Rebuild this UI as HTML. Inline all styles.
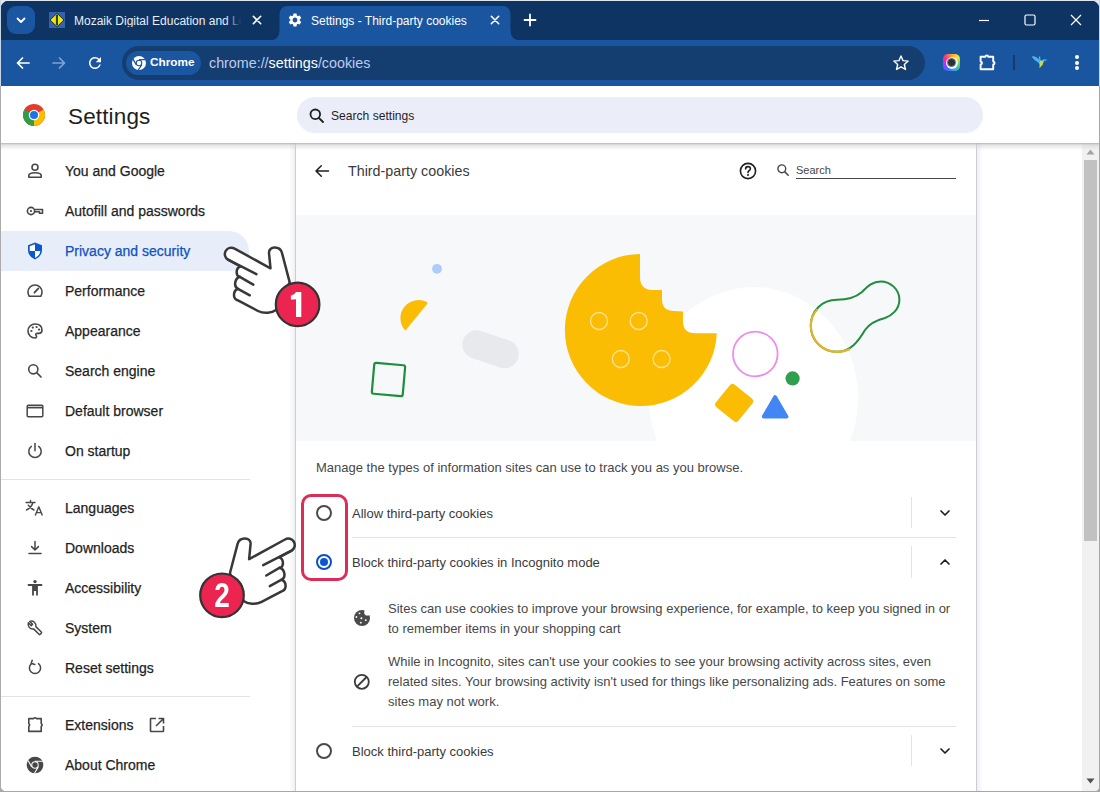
<!DOCTYPE html>
<html><head><meta charset="utf-8">
<style>
*{box-sizing:border-box;margin:0;padding:0}
html,body{width:1100px;height:792px;overflow:hidden;background:linear-gradient(#e3e9f0 0,#e3e9f0 100px,#a8a8a8 700px);font-family:"Liberation Sans",sans-serif}
.abs{position:absolute}
#win{position:absolute;left:0;top:0;width:1100px;height:792px;background:#fff;overflow:hidden;border-radius:10px 10px 8px 8px}
#frame{position:absolute;left:0;top:0;width:1100px;height:792px;border:1px solid #cdd5df;border-radius:9px 9px 7px 7px;pointer-events:none;z-index:50}
#strip{position:absolute;left:0;top:0;width:1100px;height:40px;background:#0e3463}
#toolbar{position:absolute;left:0;top:40px;width:1100px;height:46px;background:#1a56a0}
.t{position:absolute;white-space:nowrap;line-height:1}
.nav{position:absolute;left:65px;font-size:14px;color:#1f1f1f;white-space:nowrap;line-height:16px;-webkit-text-stroke:0.25px currentColor}
.navic{position:absolute;left:25px;width:20px;height:20px}
</style></head><body>
<div id="win">
  <!-- TAB STRIP -->
  <div id="strip"></div>
  <!-- inactive tab hover bg -->
  <!-- tab search button -->
  <div class="abs" style="left:7px;top:6px;width:28px;height:28px;background:#1b57a1;border-radius:9px"></div>
  <svg class="abs" style="left:14px;top:13px" width="14" height="14" viewBox="0 0 14 14"><path d="M3.5 5.5 L7 9 L10.5 5.5" fill="none" stroke="#fff" stroke-width="1.8" stroke-linecap="round" stroke-linejoin="round"/></svg>
  <!-- favicon mozaik -->
  <svg class="abs" style="left:49px;top:12px" width="16" height="16" viewBox="0 0 16 16"><rect x="0" y="0" width="16" height="16" fill="#3461b0"/><path d="M8 1.3 L15 8 L8 14.7 L1 8 Z" fill="#f7e60b" stroke="#10223a" stroke-width="0.9"/><rect x="6.9" y="2.6" width="2.1" height="10.8" fill="#24492c"/></svg>
  <div class="t" style="left:74px;top:15px;font-size:12px;color:#e8eef8;width:168px;overflow:hidden">Mozaik Digital Education and Le</div>
  <div class="abs" style="left:226px;top:8px;width:18px;height:24px;background:linear-gradient(90deg,rgba(14,52,99,0),#0e3463 85%)"></div>
  <svg class="abs" style="left:252px;top:15px" width="10" height="10" viewBox="0 0 10 10"><path d="M1.3 1.3 L8.7 8.7 M8.7 1.3 L1.3 8.7" stroke="#fff" stroke-width="1.6" stroke-linecap="round"/></svg>
  <!-- active tab -->
  <svg class="abs" style="left:0;top:0" width="600" height="41" viewBox="0 0 600 41"><path d="M269.5 40.5 Q279.5 40.5 279.5 30 L279.5 15 Q279.5 6 288.5 6 L501.5 6 Q510.5 6 510.5 15 L510.5 30 Q510.5 40.5 520.5 40.5 Z" fill="#1a56a0"/></svg>
  <svg class="abs" style="left:287px;top:12px" width="16" height="16" viewBox="0 0 24 24"><path fill="#fff" d="M19.14 12.94c.04-.3.06-.61.06-.94 0-.32-.02-.64-.07-.94l2.03-1.58a.49.49 0 0 0 .12-.61l-1.92-3.32a.488.488 0 0 0-.59-.22l-2.39.96c-.5-.38-1.03-.7-1.62-.94l-.36-2.54a.484.484 0 0 0-.48-.41h-3.84c-.24 0-.43.17-.47.41l-.36 2.54c-.59.24-1.13.57-1.62.94l-2.39-.96c-.22-.08-.47 0-.59.22L2.74 8.87c-.12.21-.08.47.12.61l2.03 1.58c-.05.3-.09.63-.09.94s.02.64.07.94l-2.03 1.58a.49.49 0 0 0-.12.61l1.92 3.32c.12.22.37.29.59.22l2.39-.96c.5.38 1.03.7 1.62.94l.36 2.54c.05.24.24.41.48.41h3.84c.24 0 .44-.17.47-.41l.36-2.54c.59-.24 1.13-.56 1.62-.94l2.39.96c.22.08.47 0 .59-.22l1.92-3.32c.12-.22.07-.47-.12-.61l-2.01-1.58zM12 15.6c-1.98 0-3.6-1.62-3.6-3.6s1.62-3.6 3.6-3.6 3.6 1.62 3.6 3.6-1.62 3.6-3.6 3.6z"/></svg>
  <div class="t" style="left:311px;top:15px;font-size:12px;color:#ffffff">Settings - Third-party cookies</div>
  <svg class="abs" style="left:490px;top:15px" width="10" height="10" viewBox="0 0 10 10"><path d="M1.3 1.3 L8.7 8.7 M8.7 1.3 L1.3 8.7" stroke="#fff" stroke-width="1.6" stroke-linecap="round"/></svg>
  <!-- new tab plus -->
  <svg class="abs" style="left:523px;top:13px" width="14" height="14" viewBox="0 0 14 14"><path d="M7 1.5 V12.5 M1.5 7 H12.5" stroke="#fff" stroke-width="1.8" stroke-linecap="round"/></svg>
  <!-- window controls -->
  <svg class="abs" style="left:978px;top:14px" width="12" height="12" viewBox="0 0 12 12"><path d="M1 6.5 H11" stroke="#fff" stroke-width="1.2"/></svg>
  <svg class="abs" style="left:1024px;top:14px" width="12" height="12" viewBox="0 0 12 12"><rect x="1" y="1" width="10" height="10" rx="1.5" fill="none" stroke="#fff" stroke-width="1.2"/></svg>
  <svg class="abs" style="left:1070px;top:14px" width="12" height="12" viewBox="0 0 12 12"><path d="M1 1 L11 11 M11 1 L1 11" stroke="#fff" stroke-width="1.2"/></svg>

  <!-- TOOLBAR -->
  <div id="toolbar"></div>
  <svg class="abs" style="left:14px;top:54px" width="18" height="18" viewBox="0 0 18 18"><path d="M15 9 H3.5 M8.5 4 L3.5 9 L8.5 14" fill="none" stroke="#fff" stroke-width="1.7" stroke-linecap="round" stroke-linejoin="round"/></svg>
  <svg class="abs" style="left:50px;top:54px" width="18" height="18" viewBox="0 0 18 18"><path d="M3 9 H14.5 M9.5 4 L14.5 9 L9.5 14" fill="none" stroke="#7fa3d6" stroke-width="1.7" stroke-linecap="round" stroke-linejoin="round"/></svg>
  <svg class="abs" style="left:86px;top:54px" width="18" height="18" viewBox="0 0 24 24"><path fill="#fff" d="M17.65 6.35A7.958 7.958 0 0 0 12 4c-4.42 0-7.99 3.58-7.99 8s3.57 8 7.99 8c3.73 0 6.84-2.550 7.73-6h-2.08A5.99 5.99 0 0 1 12 18c-3.31 0-6-2.69-6-6s2.69-6 6-6c1.660 0 3.140.690 4.220 1.780L13 11h7V4l-2.35 2.35z"/></svg>
  <!-- omnibox -->
  <div class="abs" style="left:122px;top:46px;width:803px;height:34px;background:#153e70;border-radius:17px"></div>
  <div class="abs" style="left:126px;top:51px;width:75px;height:24px;background:#1b56a0;border-radius:12px"></div>
  <svg class="abs" style="left:131px;top:55px" width="16" height="16" viewBox="0 0 16 16"><circle cx="8" cy="8" r="7" fill="#fff"/><circle cx="8" cy="8" r="3.3" fill="#1b56a0"/><circle cx="8" cy="8" r="2.2" fill="#fff"/><path d="M8 4.7 H14.6 M5.2 9.6 L1.8 3.6 M10.8 9.7 L7.3 15" stroke="#1b56a0" stroke-width="1.3"/></svg>
  <div class="t" style="left:150px;top:57px;font-size:11.8px;font-weight:700;color:#ffffff">Chrome</div>
  <div class="t" style="left:209px;top:56px;font-size:14.3px;color:#bfcbef">chrome://<span style="color:#fff">settings</span>/cookies</div>
  <svg class="abs" style="left:891px;top:53px" width="20" height="20" viewBox="0 0 24 24"><path d="M12 3.5 L14.5 9.2 L20.6 9.7 L16 13.8 L17.4 19.8 L12 16.6 L6.6 19.8 L8 13.8 L3.4 9.7 L9.5 9.2 Z" fill="none" stroke="#fff" stroke-width="1.7" stroke-linejoin="round"/></svg>
  <!-- colorful ext -->
  <div class="abs" style="left:943px;top:54px;width:17px;height:17px;border-radius:5px;background:conic-gradient(#ffa21f,#f5e83c,#5fd35a,#27b4f0,#3b6bff,#a13bff,#ff2f8a,#ffa21f)"></div>
  <div class="abs" style="left:945.5px;top:56.5px;width:12px;height:12px;border-radius:50%;background:#f2f2f2"></div>
  <div class="abs" style="left:947px;top:58px;width:9px;height:9px;border-radius:50%;background:#2a2f3a;border:1px solid #6b7280"></div>
  <!-- puzzle -->
  <svg class="abs" style="left:978px;top:52px" width="20" height="20" viewBox="0 0 20 20"><path d="M2.6 4.8 H7.4 A1.4 1.4 0 0 1 10.2 4.8 H15.2 V9.6 A1.4 1.4 0 0 1 15.2 12.4 V17.2 H2.6 V12.4 A1.4 1.4 0 0 0 2.6 9.6 Z" fill="none" stroke="#fff" stroke-width="1.9" stroke-linejoin="round"/></svg>
  <div class="abs" style="left:1013px;top:55px;width:2px;height:15px;background:#123a6b"></div>
  <!-- bird -->
  <svg class="abs" style="left:1031px;top:55px" width="17" height="14" viewBox="0 0 17 14"><path d="M0.5 1.5 Q5 0.5 8 5 Q7 2 9 1 Q9.5 4 9.5 5.5 L12.5 4.5 Q14.5 4 16.5 5 L12.8 6.3 Q12 10.5 8.5 13 Q9 9.5 7.5 7.8 Q3.5 6 0.5 1.5Z" fill="#49b4ec"/><path d="M9.5 5.8 L12.8 6.3 Q12 10.5 8.5 13 Q9.3 9.5 8.5 7.5 Z" fill="#d7d538"/></svg>
  <!-- menu dots -->
  <div class="abs" style="left:1075px;top:55px;width:4px;height:4px;border-radius:50%;background:#fff"></div>
  <div class="abs" style="left:1075px;top:60.6px;width:4px;height:4px;border-radius:50%;background:#fff"></div>
  <div class="abs" style="left:1075px;top:66.2px;width:4px;height:4px;border-radius:50%;background:#fff"></div>
  <!-- SETTINGS HEADER -->
  <div class="abs" style="left:0;top:86px;width:1100px;height:57px;background:#fff"></div>
  
  <svg class="abs" style="left:22px;top:103px" width="24" height="24" viewBox="0 0 48 48"><circle cx="24" cy="24" r="22" fill="#e33b2e"/><path d="M24 24 L43.05 13 A22 22 0 0 1 24 46 Z" fill="#fbbd04"/><path d="M24 24 L24 46 A22 22 0 0 1 4.95 13 Z" fill="#2f9e48"/><path d="M24 24 L4.95 13 A22 22 0 0 1 11.3 6 L24 24Z" fill="#e33b2e"/><circle cx="24" cy="24" r="10.5" fill="#fff"/><circle cx="24" cy="24" r="8" fill="#1a73e8"/></svg>
  <div class="t" style="left:68px;top:106px;font-size:22.5px;letter-spacing:0.15px;color:#1f1f1f">Settings</div>
  <div class="abs" style="left:297px;top:97px;width:686px;height:36px;background:#ebedf8;border-radius:18px"></div>
  <svg class="abs" style="left:308px;top:107px" width="18" height="18" viewBox="0 0 18 18"><circle cx="7.3" cy="7.3" r="4.8" fill="none" stroke="#1f1f1f" stroke-width="1.8"/><path d="M10.8 10.8 L15 15" stroke="#1f1f1f" stroke-width="1.9" stroke-linecap="round"/></svg>
  <div class="t" style="left:331px;top:110px;font-size:12.1px;color:#1f1f1f">Search settings</div>

  <!-- SIDEBAR -->
  <div class="abs" style="left:0;top:231px;width:249px;height:40px;background:#e8eef9;border-radius:0 20px 20px 0"></div>
  <div class="nav" style="top:163px">You and Google</div>
  <div class="nav" style="top:203px">Autofill and passwords</div>
  <div class="nav" style="top:243px;color:#0f52c2">Privacy and security</div>
  <div class="nav" style="top:283px">Performance</div>
  <div class="nav" style="top:323px">Appearance</div>
  <div class="nav" style="top:363px">Search engine</div>
  <div class="nav" style="top:403px">Default browser</div>
  <div class="nav" style="top:443px">On startup</div>
  <div class="abs" style="left:0;top:479px;width:250px;height:1px;background:#e3e3e3"></div>
  <div class="nav" style="top:500px">Languages</div>
  <div class="nav" style="top:540px">Downloads</div>
  <div class="nav" style="top:580px">Accessibility</div>
  <div class="nav" style="top:620px">System</div>
  <div class="nav" style="top:660px">Reset settings</div>
  <div class="abs" style="left:0;top:696px;width:250px;height:1px;background:#e3e3e3"></div>
  <div class="nav" style="top:717px">Extensions</div>
  <div class="nav" style="top:757px">About Chrome</div>

  <!-- sidebar icons -->
  <svg class="abs" style="left:25px;top:161px" width="20" height="20" viewBox="0 0 20 20"><circle cx="10" cy="6.3" r="3" fill="none" stroke="#474747" stroke-width="1.6"/><path d="M3.8 16.2 V14.6 Q3.8 11.8 10 11.8 Q16.2 11.8 16.2 14.6 V16.2 Z" fill="none" stroke="#474747" stroke-width="1.6" stroke-linejoin="round"/></svg>
  <svg class="abs" style="left:25px;top:201px" width="20" height="20" viewBox="0 0 20 20"><circle cx="6" cy="10" r="3.6" fill="none" stroke="#474747" stroke-width="1.6"/><circle cx="6" cy="10" r="1.1" fill="#474747"/><path d="M9.6 8.5 H17.5 V12.2 H14.5 V10.8 H9.8" fill="none" stroke="#474747" stroke-width="1.6" stroke-linejoin="round"/></svg>
  <svg class="abs" style="left:25px;top:241px" width="20" height="20" viewBox="0 0 20 20"><path d="M10 1.6 L17 4.3 V9.3 Q17 15.3 10 18.6 Q3 15.3 3 9.3 V4.3 Z" fill="#0b57d0"/><path d="M10 10 H15.3 Q14.9 14.5 10 17 Z" fill="#fff"/><path d="M10 3.3 V10 H4.7 V5.3 Z" fill="#fff"/></svg>
  <svg class="abs" style="left:25px;top:281px" width="20" height="20" viewBox="0 0 20 20"><path d="M4.2 15.3 Q3 13.4 3 11 A7 7 0 0 1 17 11 Q17 13.4 15.8 15.3 Z" fill="none" stroke="#474747" stroke-width="1.6" stroke-linejoin="round"/><path d="M9.4 11.7 L13.4 7.4" stroke="#474747" stroke-width="1.8" stroke-linecap="round"/></svg>
  <svg class="abs" style="left:25px;top:321px" width="20" height="20" viewBox="0 0 20 20"><path d="M10 3 A7 7 0 0 0 10 17 Q11.6 17 11.6 15.6 Q11.6 14.8 11 14.2 Q10.5 13.6 10.9 12.9 Q11.3 12.4 12.2 12.4 H13.6 Q17 12.4 17 9.3 Q17 3 10 3 Z" fill="none" stroke="#474747" stroke-width="1.6" stroke-linejoin="round"/><circle cx="6.4" cy="10" r="1.1" fill="#474747"/><circle cx="7.8" cy="6.6" r="1.1" fill="#474747"/><circle cx="11.6" cy="6" r="1.1" fill="#474747"/><circle cx="14" cy="8.6" r="1.1" fill="#474747"/></svg>
  <svg class="abs" style="left:25px;top:361px" width="20" height="20" viewBox="0 0 20 20"><circle cx="8.3" cy="8.3" r="4.6" fill="none" stroke="#474747" stroke-width="1.6"/><path d="M11.7 11.7 L16 16" stroke="#474747" stroke-width="1.7" stroke-linecap="round"/></svg>
  <svg class="abs" style="left:25px;top:401px" width="20" height="20" viewBox="0 0 20 20"><rect x="2.2" y="4.2" width="15.6" height="11.6" rx="1" fill="none" stroke="#474747" stroke-width="1.5"/><path d="M2.5 6.6 H17.5" stroke="#474747" stroke-width="1.7"/></svg>
  <svg class="abs" style="left:25px;top:441px" width="20" height="20" viewBox="0 0 20 20"><path d="M6.3 5.4 A6.2 6.2 0 1 0 13.7 5.4" fill="none" stroke="#474747" stroke-width="1.5" stroke-linecap="round"/><path d="M10 2.6 V9.8" stroke="#474747" stroke-width="1.5" stroke-linecap="round"/></svg>
  <!-- languages -->
  <svg class="abs" style="left:24px;top:498px" width="22" height="20" viewBox="0 0 22 20"><path d="M2 4.5 H11 M6.5 2.5 V4.5 M9 4.5 Q7.5 9.5 2.5 12 M4.3 7.2 Q6.5 10.5 10 12" fill="none" stroke="#474747" stroke-width="1.4" stroke-linecap="round"/><path d="M11.2 17.5 L14.8 8.8 L18.4 17.5 M12.5 14.6 H17.1" fill="none" stroke="#474747" stroke-width="1.4" stroke-linejoin="round"/></svg>
  <svg class="abs" style="left:25px;top:538px" width="20" height="20" viewBox="0 0 20 20"><path d="M10 3.5 V11.8 M6.6 8.6 L10 12 L13.4 8.6" fill="none" stroke="#474747" stroke-width="1.5" stroke-linecap="round" stroke-linejoin="round"/><path d="M4 15.6 H16" stroke="#474747" stroke-width="1.5" stroke-linecap="round"/></svg>
  <svg class="abs" style="left:25px;top:578px" width="20" height="20" viewBox="0 0 20 20"><circle cx="10" cy="3.6" r="1.7" fill="#474747"/><path d="M3.5 7 H16.5" stroke="#474747" stroke-width="1.8" stroke-linecap="round"/><path d="M8 7 V17.5 M12 7 V17.5 M8 12 H12" stroke="#474747" stroke-width="1.8"/><rect x="8" y="7" width="4" height="5" fill="#474747"/></svg>
  <svg class="abs" style="left:25px;top:618px" width="20" height="20" viewBox="0 0 20 20"><path d="M3.4 4.8 L6.2 7.6 L7.6 6.2 L4.8 3.4 A4.6 4.6 0 0 1 10.9 8.6 L16.3 14 Q16.9 14.6 16.3 15.2 L15.2 16.3 Q14.6 16.9 14 16.3 L8.6 10.9 A4.6 4.6 0 0 1 3.4 4.8 Z" fill="none" stroke="#474747" stroke-width="1.5" stroke-linejoin="round"/></svg>
  <svg class="abs" style="left:25px;top:658px" width="20" height="20" viewBox="0 0 20 20"><path d="M6.5 5.6 A5.6 5.6 0 1 0 13.5 5.6" fill="none" stroke="#474747" stroke-width="1.5" stroke-linecap="round"/><path d="M10 5.2 L6.2 5.2 L6.2 2.2" fill="none" stroke="#474747" stroke-width="1.5" stroke-linejoin="round" stroke-linecap="round" transform="rotate(20 6.2 5.2)"/></svg>
  <!-- extensions -->
  <svg class="abs" style="left:25px;top:715px" width="20" height="20" viewBox="0 0 20 20"><path d="M3.8 3.6 H8.6 Q10 1.8 11.4 3.6 H16.2 V8.6 Q18.2 10 16.2 11.4 V16.4 H3.8 V11.4 Q5.4 10 3.8 8.6 Z" fill="none" stroke="#474747" stroke-width="1.6" stroke-linejoin="round"/></svg>
  <svg class="abs" style="left:148px;top:716px" width="18" height="18" viewBox="0 0 18 18"><path d="M8 2.5 H3 A0.5 0.5 0 0 0 2.5 3 V15 A0.5 0.5 0 0 0 3 15.5 H15 A0.5 0.5 0 0 0 15.5 15 V10" fill="none" stroke="#474747" stroke-width="1.6"/><path d="M10.5 2.5 H15.5 V7.5 M15.3 2.7 L8 10" fill="none" stroke="#474747" stroke-width="1.6"/></svg>
  <svg class="abs" style="left:25px;top:755px" width="20" height="20" viewBox="0 0 48 48"><circle cx="24" cy="24" r="20" fill="#474747"/><circle cx="24" cy="24" r="9" fill="#fff"/><circle cx="24" cy="24" r="6.5" fill="#474747"/><path d="M24 15 H42 M16.2 28.5 L7.2 13 M31.8 28.5 L22.8 44" stroke="#fff" stroke-width="2.6"/></svg>
  <!-- MAIN CARD -->
  <div class="abs" style="left:289px;top:143px;width:6px;height:649px;background:linear-gradient(90deg,rgba(255,255,255,0),#f0f0f3)"></div>
  <div class="abs" style="left:977px;top:143px;width:6px;height:649px;background:linear-gradient(90deg,#f0f0f3,rgba(255,255,255,0))"></div>
  <div class="abs" style="left:295px;top:143px;width:682px;height:649px;background:#fff;border-left:1px solid #cdcdd1;border-right:1px solid #cdcdd1"></div>
  
  <!-- subpage header -->
  <svg class="abs" style="left:313px;top:162px" width="18" height="18" viewBox="0 0 18 18"><path d="M15.5 9 H3 M8.3 3.7 L3 9 L8.3 14.3" fill="none" stroke="#1f1f1f" stroke-width="1.5" stroke-linecap="round" stroke-linejoin="round"/></svg>
  <div class="t" style="left:348px;top:164px;font-size:14.3px;color:#3a3a3a">Third-party cookies</div>
  <svg class="abs" style="left:738px;top:161px" width="20" height="20" viewBox="0 0 20 20"><circle cx="10" cy="10" r="7.6" fill="none" stroke="#1f1f1f" stroke-width="1.6"/><path d="M7.6 7.9 Q7.6 5.6 10 5.6 Q12.4 5.6 12.4 7.7 Q12.4 9 11 9.7 Q10 10.2 10 11.6" fill="none" stroke="#1f1f1f" stroke-width="1.6" stroke-linecap="round"/><circle cx="10" cy="13.9" r="1" fill="#1f1f1f"/></svg>
  <svg class="abs" style="left:776px;top:163px" width="14" height="14" viewBox="0 0 14 14"><circle cx="5.8" cy="5.8" r="3.9" fill="none" stroke="#474747" stroke-width="1.4"/><path d="M8.6 8.6 L12.2 12.2" stroke="#474747" stroke-width="1.5" stroke-linecap="round"/></svg>
  <div class="t" style="left:796px;top:165px;font-size:11px;color:#474747">Search</div>
  <div class="abs" style="left:796px;top:178px;width:160px;height:1px;background:#474747"></div>

  <!-- BANNER -->
  <svg class="abs" style="left:296px;top:215px" width="680" height="226" viewBox="296 215 680 226">
    <rect x="296" y="215" width="680" height="226" fill="#f7f8fa"/>
    <ellipse cx="753.5" cy="398" rx="104.5" ry="111" fill="#ffffff"/>
    <!-- cookie -->
    <path d="M640 254 A76 76 0 1 0 716.8 333.3 L695 333.3 Q683 333 683 321.5 L683 311.5 L673.5 311 Q662 310.5 662 299.5 L662 290 L652 290 Q640 289.5 640 277 Z" fill="#fbbc04"/>
    <g fill="none" stroke="#fde293" stroke-width="1.3">
      <circle cx="599" cy="321" r="8.5"/><circle cx="638.7" cy="321" r="8.5"/>
      <circle cx="620.8" cy="359" r="8.5"/><circle cx="661.6" cy="359" r="8.5"/>
    </g>
    <circle cx="437" cy="268.8" r="4.9" fill="#aecbfa"/>
    <path d="M426.5 303 A17.2 17.2 0 0 0 405.3 329.2 Z" fill="#fbbc04" stroke="#fbbc04" stroke-width="2" stroke-linejoin="round"/>
    <rect x="461.5" y="335" width="58" height="28.5" rx="14.25" fill="#e8e9ec" transform="rotate(19 490.5 349.2)"/>
    <rect x="373" y="364" width="31" height="31" rx="2" fill="none" stroke="#1e8e3e" stroke-width="2.2" transform="rotate(5 388.5 379.5)"/>
    <circle cx="755.3" cy="354" r="22.3" fill="none" stroke="#ee8bef" stroke-width="1.8"/>
    <circle cx="792.6" cy="378.4" r="7.1" fill="#2e9e4f"/>
    <rect x="719.7" y="388.4" width="29" height="29" rx="3.5" fill="#fbbc04" transform="rotate(39 734.2 402.9)"/>
    <path d="M775.1 397 L786.6 416.6 L763.6 416.6 Z" fill="#4285f4" stroke="#4285f4" stroke-width="3.6" stroke-linejoin="round"/>
    <path d="M837 351.8 C822 351.8 810.8 340 810.8 325.7 C810.8 311 822 299.8 837 299.8 C848 299.8 855 298 862 292 C868 286 873 281.4 880.7 281.4 C891 281.4 899.4 290 899.4 299.5 C899.4 310 891 316 885 318 C877 320 870 323 865 330 C858 342 850 351.8 837 351.8 Z" fill="none" stroke="#1e8e3e" stroke-width="2"/>
    <path d="M850 349 C846 351 841 351.8 837 351.8 C822 351.8 810.8 340 810.8 325.7 C810.8 319 813 313.5 817.6 309.2" fill="none" stroke="#e3b42b" stroke-width="2.2"/>
  </svg>

  <div class="t" style="left:316px;top:461px;font-size:13px;color:#474747">Manage the types of information sites can use to track you as you browse.</div>

  <!-- radio rows -->
  <div class="abs" style="left:316px;top:505px;width:16px;height:16px;border-radius:50%;border:2px solid #4a4a4a"></div>
  <div class="t" style="left:352px;top:507px;font-size:13px;color:#3a3a3a">Allow third-party cookies</div>
  <div class="abs" style="left:911px;top:497px;width:1px;height:31px;background:#e3e3e3"></div>
  <svg class="abs" style="left:938px;top:506px" width="14" height="14" viewBox="0 0 14 14"><path d="M3 5 L7 9 L11 5" fill="none" stroke="#1f1f1f" stroke-width="1.7" stroke-linecap="round" stroke-linejoin="round"/></svg>
  <div class="abs" style="left:352px;top:537px;width:604px;height:1px;background:#e3e3e3"></div>

  <div class="abs" style="left:316px;top:554px;width:16px;height:16px;border-radius:50%;border:2.3px solid #0b4fc8"></div>
  <div class="abs" style="left:320px;top:558px;width:8px;height:8px;border-radius:50%;background:#0b57d0"></div>
  <div class="t" style="left:352px;top:556px;font-size:13px;color:#3a3a3a">Block third-party cookies in Incognito mode</div>
  <div class="abs" style="left:911px;top:546px;width:1px;height:32px;background:#e3e3e3"></div>
  <svg class="abs" style="left:938px;top:555px" width="14" height="14" viewBox="0 0 14 14"><path d="M3 9 L7 5 L11 9" fill="none" stroke="#1f1f1f" stroke-width="1.7" stroke-linecap="round" stroke-linejoin="round"/></svg>

  <!-- expanded -->
  <svg class="abs" style="left:353px;top:609px" width="18" height="18" viewBox="0 0 18 18"><defs><mask id="ck"><rect width="18" height="18" fill="#fff"/><circle cx="14.6" cy="3.2" r="3.4" fill="#000"/><circle cx="6.5" cy="4.3" r="0.9" fill="#000"/><circle cx="3.4" cy="8" r="0.9" fill="#000"/><circle cx="8.4" cy="9.3" r="1" fill="#000"/><circle cx="12.8" cy="11.2" r="0.9" fill="#000"/><circle cx="7.8" cy="13.7" r="0.9" fill="#000"/></mask></defs><circle cx="9" cy="9" r="8" fill="#4a4a4a" mask="url(#ck)"/></svg>
  <div class="abs" style="left:388px;top:599px;font-size:13px;line-height:20px;color:#474747;width:570px">Sites can use cookies to improve your browsing experience, for example, to keep you signed in or<br>to remember items in your shopping cart</div>
  <svg class="abs" style="left:353px;top:673px" width="18" height="18" viewBox="0 0 18 18"><circle cx="8.8" cy="8.8" r="7" fill="none" stroke="#3c3c3c" stroke-width="1.8"/><path d="M4 13.6 L13.6 4" stroke="#3c3c3c" stroke-width="1.9"/></svg>
  <div class="abs" style="left:388px;top:652px;font-size:13px;line-height:20px;color:#474747;width:570px">While in Incognito, sites can't use your cookies to see your browsing activity across sites, even<br>related sites. Your browsing activity isn't used for things like personalizing ads. Features on some<br>sites may not work.</div>
  <div class="abs" style="left:352px;top:726px;width:604px;height:1px;background:#e3e3e3"></div>

  <div class="abs" style="left:316px;top:743px;width:16px;height:16px;border-radius:50%;border:2px solid #4a4a4a"></div>
  <div class="t" style="left:352px;top:745px;font-size:13px;color:#3a3a3a">Block third-party cookies</div>
  <div class="abs" style="left:911px;top:735px;width:1px;height:31px;background:#e3e3e3"></div>
  <svg class="abs" style="left:938px;top:744px" width="14" height="14" viewBox="0 0 14 14"><path d="M3 5 L7 9 L11 5" fill="none" stroke="#1f1f1f" stroke-width="1.7" stroke-linecap="round" stroke-linejoin="round"/></svg>

  <!-- SCROLLBAR -->
  <div class="abs" style="left:1082px;top:143px;width:17px;height:649px;background:#f1f1f1"></div>
  <div class="abs" style="left:1084px;top:160px;width:13px;height:381px;background:#c1c1c1"></div>
  <svg class="abs" style="left:1086px;top:148px" width="9" height="8" viewBox="0 0 9 8"><path d="M0.5 6.5 L4.5 1.5 L8.5 6.5 Z" fill="#a3a3a3"/></svg>
  <svg class="abs" style="left:1086px;top:777px" width="9" height="8" viewBox="0 0 9 8"><path d="M0.5 1.5 L4.5 6.5 L8.5 1.5 Z" fill="#505050"/></svg>
  <div class="abs" style="left:0;top:143px;width:1100px;height:7px;background:linear-gradient(rgba(170,170,174,0.85),rgba(210,210,214,0.6) 2px,rgba(255,255,255,0))"></div>

  <!-- ANNOTATIONS -->
  <div class="abs" style="left:301px;top:494px;width:47px;height:87px;border:3px solid #dc2d58;border-radius:10px"></div>
  <svg class="abs" style="left:0;top:0;z-index:20" width="1100" height="792" viewBox="0 0 1100 792">
    <defs>
      <g id="hand">
        <path d="M270.5 268.3 L234.6 248.6 A6.4 6.4 0 0 0 228 259.7 L240.5 266.5 C235.5 268 235.5 276 239.8 276.8 C234.5 278.5 233.5 287 238 288.8 C233 290.5 232.5 298.5 237.5 300.2 L258 311 C264 314 272 313 276 310 L289.7 282.4 L282 253 C280 245.5 268.5 246 269 253 L270.5 268.3 Z" fill="#fff" stroke="#383838" stroke-width="2.5" stroke-linejoin="round"/>
        <path d="M228 259.7 L256.4 274.2 M239.8 276.8 L253.3 284.6 M238 288.8 L249.8 295.3" fill="none" stroke="#383838" stroke-width="2.5" stroke-linecap="round"/>
        <circle cx="297.6" cy="304.4" r="21.8" fill="#ec2550" stroke="#333333" stroke-width="2.2"/>
      </g>
    </defs>
    <use href="#hand"/>
    <use href="#hand" transform="translate(222 595.3) scale(-1 1) translate(-297.6 -304.4)"/>
  </svg>
  <svg class="abs" style="left:0;top:0;z-index:21" width="320" height="330" viewBox="0 0 320 330"><path d="M296 292 H301.3 V317 H296 V299.2 Q293.6 299.6 290.9 299.6 V295.8 Q294.6 295 296 292 Z" fill="#fff"/></svg>
  <div class="t" style="left:205px;top:577px;width:34px;text-align:center;font-size:35px;font-weight:700;color:#fff;z-index:21;transform:scaleX(0.8);transform-origin:50% 50%">2</div>
</div>
<div class="abs" style="left:0;top:0;width:1100px;height:1px;background:#dfe6ee;z-index:60"></div><div class="abs" style="left:0;top:0;width:1px;height:86px;background:#c9d6e6;z-index:60"></div><div class="abs" style="left:1099px;top:0;width:1px;height:86px;background:#c9d6e6;z-index:60"></div><div class="abs" style="left:0;top:86px;width:1px;height:706px;background:#ababab;z-index:60"></div><div class="abs" style="left:1099px;top:86px;width:1px;height:706px;background:#a6a6a6;z-index:60"></div><div class="abs" style="left:0;top:791px;width:1100px;height:1px;background:#a6a6a6;z-index:60"></div>
</body></html>
